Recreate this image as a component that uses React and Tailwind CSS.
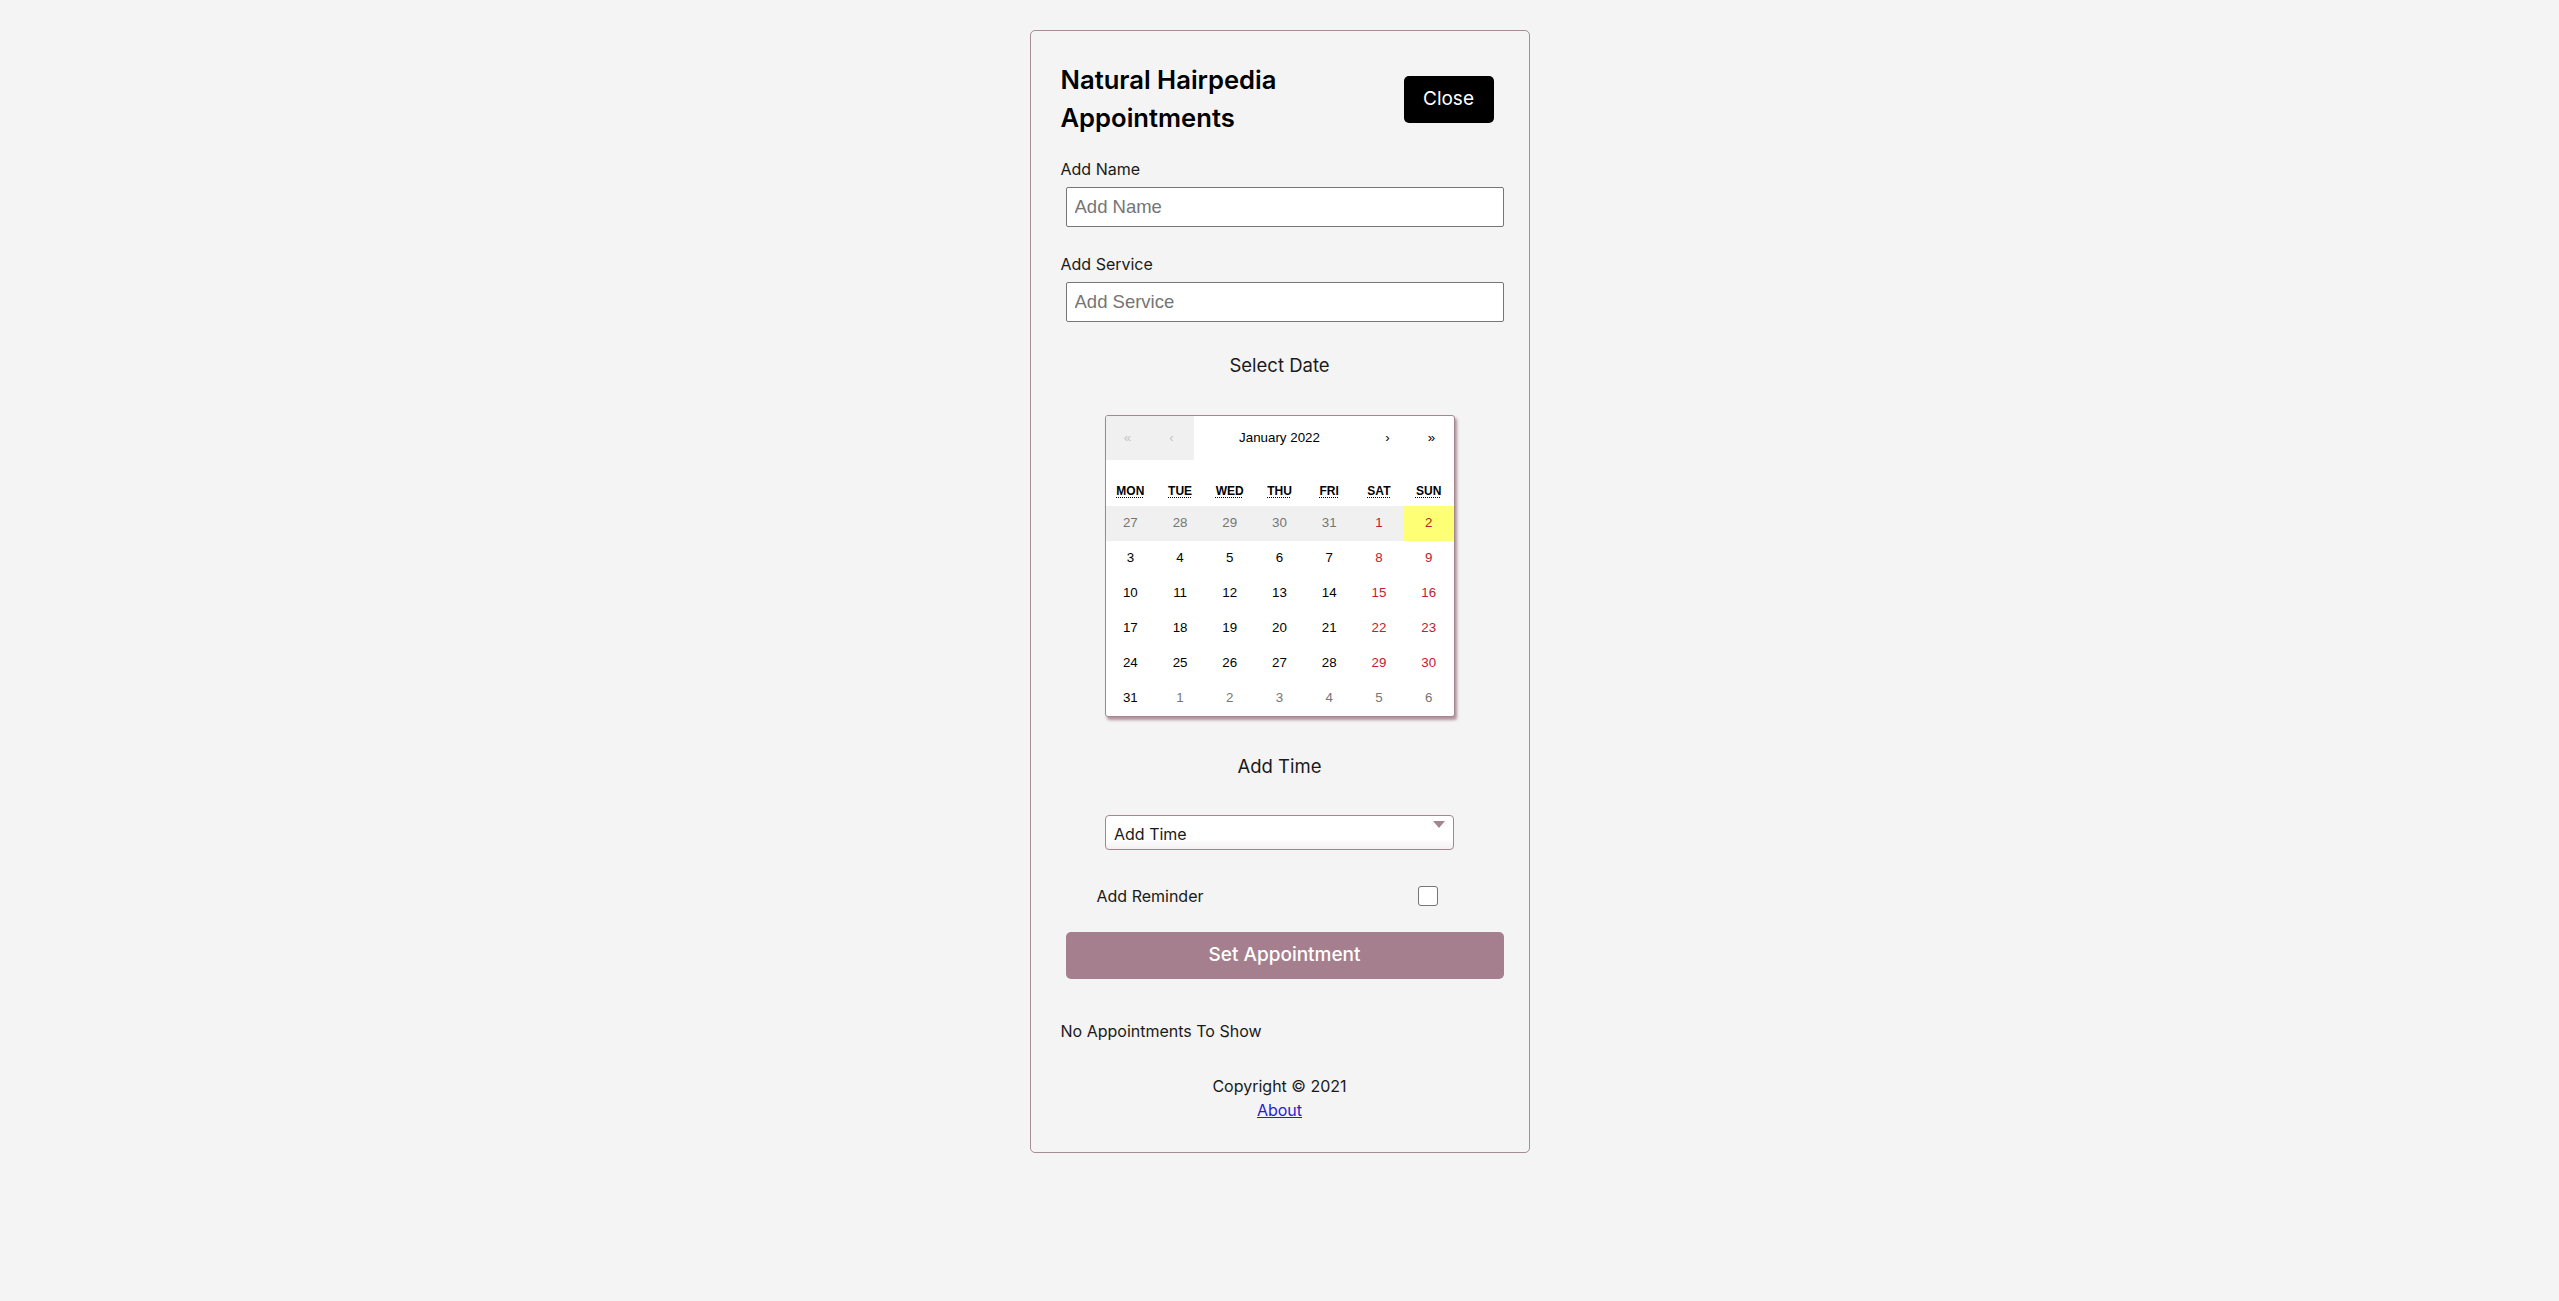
import { useState } from 'react';

const font = { fontFamily: 'Inter, "Open Sans", sans-serif' };

const weekdays = [
  { short: 'Mon', long: 'Monday' },
  { short: 'Tue', long: 'Tuesday' },
  { short: 'Wed', long: 'Wednesday' },
  { short: 'Thu', long: 'Thursday' },
  { short: 'Fri', long: 'Friday' },
  { short: 'Sat', long: 'Saturday' },
  { short: 'Sun', long: 'Sunday' },
];

// 6 rows of January 2022, week starting on Monday
const buildDays = () => {
  const days = [];
  [27, 28, 29, 30, 31].forEach((d) => days.push({ d, other: true, disabled: true }));
  for (let d = 1; d <= 31; d++) days.push({ d, other: false, disabled: d < 2, today: d === 2 });
  [1, 2, 3, 4, 5, 6].forEach((d) => days.push({ d, other: true }));
  return days;
};

const Calendar = () => {
  const days = buildDays();
  return (
    <div className="w-[350px] bg-white border border-[#a4868f] rounded-[3px] shadow-[2px_3px_3px_rgba(166,127,142,0.85)] font-['Liberation_Sans',Arial,sans-serif] leading-[1.125em] overflow-hidden">
      <div className="flex h-[44px] mb-4 text-[13.33px]">
        <button disabled className="w-[44px] bg-[#f0f0f0] text-[#c4c4c4]">«</button>
        <button disabled className="w-[44px] bg-[#f0f0f0] text-[#c4c4c4]">‹</button>
        <button className="flex-1 text-black">January 2022</button>
        <button className="w-[44px] text-black">›</button>
        <button className="w-[44px] text-black">»</button>
      </div>
      <div className="grid grid-cols-7 text-center uppercase font-bold text-[12px]">
        {weekdays.map((w) => (
          <div key={w.short} className="p-[6px]">
            <abbr title={w.long} className="underline decoration-dotted decoration-1 underline-offset-2">
              {w.short}
            </abbr>
          </div>
        ))}
      </div>
      <div className="grid grid-cols-7 text-center text-[13.33px]">
        {days.map((day, i) => {
          const col = i % 7;
          const weekend = col >= 5;
          let color = 'text-black';
          if (weekend) color = 'text-[#c1202d]';
          if (day.other) color = 'text-[#757575]';
          let bg = '';
          if (day.disabled) bg = 'bg-[#f0f0f0]';
          if (day.today) bg = 'bg-[#ffff76]';
          return (
            <button key={i} className={`h-[35px] leading-[16px] ${color} ${bg}`}>
              {day.d}
            </button>
          );
        })}
      </div>
    </div>
  );
};

export default function App() {
  const [reminder, setReminder] = useState(false);

  return (
    <div className="min-h-screen bg-[#f4f4f4] flex justify-center pt-[30px]" style={font}>
      <div className="w-[500px] h-[1123px] border border-[#a58c95] rounded-[5px] px-[30px] pt-[30px]">
        <div className="flex items-center justify-between">
          <h1 className="text-[25.6px] leading-[38.4px] font-semibold text-black">
            Natural Hairpedia
            <br />
            Appointments
          </h1>
          <button className="w-[90px] h-[47px] bg-black text-white rounded-[5px] text-[19px] mr-[5px]">
            Close
          </button>
        </div>

        <label className="block mt-[19px] text-[16px] leading-[24px] text-[#1a1a1a]">Add Name</label>
        <input
          placeholder="Add Name"
          className="block mt-[6px] ml-[5px] w-[438px] h-[40px] bg-white border border-[#767676] rounded-[2px] px-[8px] text-[18.5px] font-['Liberation_Sans',Arial,sans-serif] placeholder:text-[#757575] outline-none"
        />

        <label className="block mt-[25px] text-[16px] leading-[24px] text-[#1a1a1a]">Add Service</label>
        <input
          placeholder="Add Service"
          className="block mt-[6px] ml-[5px] w-[438px] h-[40px] bg-white border border-[#767676] rounded-[2px] px-[8px] text-[18.5px] font-['Liberation_Sans',Arial,sans-serif] placeholder:text-[#757575] outline-none"
        />

        <div className="mt-[30px] text-center text-[18.5px] leading-[27px] text-[#1a1a1a]">Select Date</div>
        <div className="flex justify-center mt-[36px]">
          <Calendar />
        </div>

        <div className="mt-[36px] text-center text-[18.5px] leading-[27px] text-[#1a1a1a]">Add Time</div>
        <div className="flex justify-center mt-[35px]">
          <div className="relative w-[349px] h-[35px] bg-gradient-to-b from-white from-70% to-[#f4f0f2] border border-[#a4868f] rounded-[4px] flex items-end pl-[8px] pb-[3px] text-[16px] text-[#1a1a1a]">
            Add Time
            <svg className="absolute right-[8px] top-[5px]" width="12" height="8" viewBox="0 0 12 8">
              <polygon points="0,0 12,0 6,7" fill="#a4868f" />
            </svg>
          </div>
        </div>

        <div className="flex items-center justify-between pl-[36px] pr-[61px] mt-[34px]">
          <span className="text-[16px] leading-[24px] text-[#1a1a1a]">Add Reminder</span>
          <input
            type="checkbox"
            checked={reminder}
            onChange={() => setReminder(!reminder)}
            className="appearance-none w-[20px] h-[20px] bg-white border border-[#767676] rounded-[3px]"
          />
        </div>

        <button className="block mt-[24px] ml-[5px] w-[438px] h-[47px] bg-[#a57f8d] text-white rounded-[5px] text-[19px] font-medium">
          Set Appointment
        </button>

        <div className="mt-[40px] text-[16px] leading-[24px] text-[#1a1a1a]">No Appointments To Show</div>

        <div className="mt-[31px] text-center text-[16px] leading-[24px] text-[#1a1a1a]">
          <div>Copyright © 2021</div>
          <a href="#" className="text-[#2a1bd6] underline">About</a>
        </div>
      </div>
    </div>
  );
}
